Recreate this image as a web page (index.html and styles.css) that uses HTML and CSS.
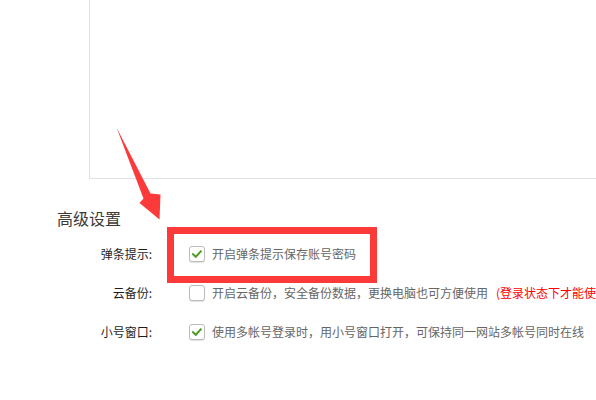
FILE: index.html
```html
<!DOCTYPE html>
<html lang="zh-CN">
<head>
<meta charset="utf-8">
<title>高级设置</title>
<link rel="stylesheet" href="styles.css">
</head>
<body>
<div class="page">
  <div class="panel"></div>
  <section class="advanced">
    <h2 class="title">高级设置</h2>
    <div class="row">
      <div class="label">弹条提示:</div>
      <span class="check checked">
        <svg viewBox="0 0 16 16" width="16" height="16"><path d="M4 8.2 L6.8 10.8 L11.8 5.4" fill="none" stroke="#4f9a26" stroke-width="2" stroke-linecap="square"/></svg>
      </span>
      <span class="opt">开启弹条提示保存账号密码</span>
    </div>
    <div class="row">
      <div class="label">云备份:</div>
      <span class="check"></span>
      <span class="opt">开启云备份，安全备份数据，更换电脑也可方便使用</span>
      <span class="warn">(登录状态下才能使用)</span>
    </div>
    <div class="row">
      <div class="label">小号窗口:</div>
      <span class="check checked">
        <svg viewBox="0 0 16 16" width="16" height="16"><path d="M4 8.2 L6.8 10.8 L11.8 5.4" fill="none" stroke="#4f9a26" stroke-width="2" stroke-linecap="square"/></svg>
      </span>
      <span class="opt">使用多帐号登录时，用小号窗口打开，可保持同一网站多帐号同时在线</span>
    </div>
  </section>

  <div class="mark-box"></div>
  <svg class="mark-arrow" width="596" height="400" viewBox="0 0 596 400">
    <polygon points="116.5,127.5 150.5,193.5 160.5,194.5 159.5,219.5 139.5,203 143.5,198.5" fill="#fc3a3a"/>
  </svg>
</div>
</body>
</html>
```

FILE: styles.css
```css
html, body {
  margin: 0;
  padding: 0;
  background: #ffffff;
  overflow: hidden;
}

.page {
  position: relative;
  width: 596px;
  height: 400px;
  overflow: hidden;
  font-family: "Noto Sans CJK SC", "Noto Sans", "Liberation Sans", sans-serif;
}

.panel {
  margin-left: 89px;
  width: 600px;
  height: 178px;
  border-left: 1px solid #e2e2e2;
  border-bottom: 1px solid #e2e2e2;
}

.advanced {
  padding: 27px 0 0 57px;
}

.title {
  margin: 0 0 4px 0;
  font-size: 16px;
  line-height: 24px;
  font-weight: normal;
  color: #3a3a3a;
}

.row {
  display: flex;
  align-items: center;
  height: 39px;
  white-space: nowrap;
  font-size: 12px;
  line-height: 16px;
}

.label {
  width: 95px;
  flex: none;
  text-align: right;
  color: #1e1e1e;
}

.check {
  flex: none;
  box-sizing: border-box;
  width: 16px;
  height: 16px;
  margin-left: 37px;
  border: 1px solid #bcbcbc;
  border-radius: 3px;
  background: #ffffff;
  box-shadow: 0 1px 1px rgba(0, 0, 0, 0.12);
  display: flex;
  align-items: center;
  justify-content: center;
}

.check svg {
  display: block;
  margin: -1px;
}

.opt {
  margin-left: 7px;
  color: #666666;
}

.warn {
  margin-left: 8px;
  color: #ff0000;
}

.mark-box {
  position: absolute;
  left: 167px;
  top: 227px;
  width: 196px;
  height: 42px;
  border: 7px solid #fc3a3a;
}

.mark-arrow {
  position: absolute;
  left: 0;
  top: 0;
}
```
